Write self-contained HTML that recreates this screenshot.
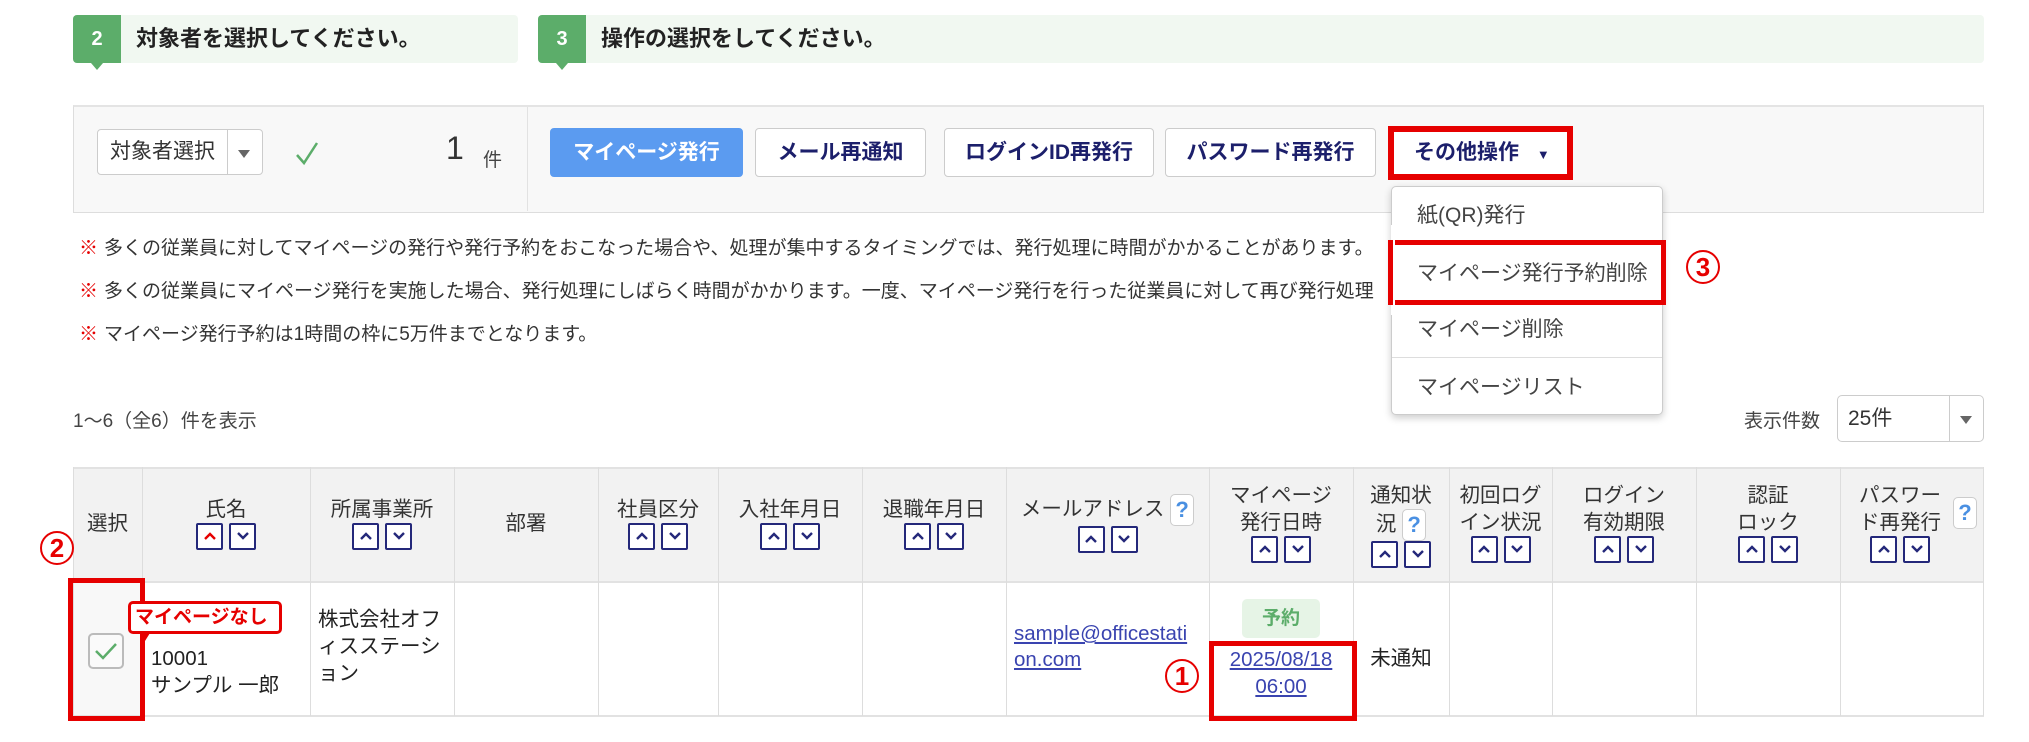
<!DOCTYPE html>
<html><head><meta charset="utf-8"><style>
*{margin:0;padding:0;box-sizing:border-box}
body{width:2029px;height:742px;background:#fff;position:relative;overflow:hidden;font-family:"Liberation Sans","Noto Sans CJK JP",sans-serif;color:#333}
.a{position:absolute}
.step{position:absolute;top:15px;height:48px;background:#f1f8f1;border-radius:4px}
.num{position:absolute;left:0;top:0;width:48px;height:48px;background:#5cad6a;color:#fff;font-weight:bold;font-size:20px;text-align:center;line-height:48px;border-radius:4px 0 0 4px}
.num:after{content:"";position:absolute;left:18px;top:48px;border:6px solid transparent;border-top:7px solid #5cad6a}
.stxt{position:absolute;left:63px;top:0;line-height:48px;font-size:22px;font-weight:bold;color:#222}
.btn{position:absolute;top:128px;height:49px;border:1px solid #ccc;border-radius:4px;background:#fff;color:#1c1f6b;font-weight:bold;font-size:21px;text-align:center;line-height:47px;white-space:nowrap}
.note{position:absolute;left:79px;font-size:19px;color:#333;white-space:nowrap}
.note b{color:#e60000;font-weight:normal;margin-right:6px}
.mi{position:absolute;left:1417px;font-size:21px;color:#444;white-space:nowrap}
.col{position:absolute;top:467px;height:249px;border-left:1px solid #ddd}
.hd{position:absolute;font-size:20.5px;color:#333;text-align:center;line-height:27px;white-space:nowrap}
.sb{display:inline-block;width:27px;height:27px;border:2px solid #24287a;border-radius:2px;background:#fff;margin:0 3px;vertical-align:top}
.sb svg{display:block;margin:6px auto 0}
.q{display:inline-block;width:24px;height:32px;border:1px solid #ccc;border-radius:5px;background:#fff;color:#4a90e2;font-weight:bold;font-size:22px;line-height:30px;text-align:center;vertical-align:middle}
.circ{position:absolute;width:34px;height:34px;border:2px solid #e60000;border-radius:50%;color:#e60000;font-weight:bold;font-size:26px;text-align:center;line-height:30px}
</style></head><body>

<div class="step" style="left:73px;width:445px"><div class="num">2</div><div class="stxt">対象者を選択してください。</div></div>
<div class="step" style="left:538px;width:1446px"><div class="num">3</div><div class="stxt">操作の選択をしてください。</div></div>

<div class="a" style="left:73px;top:105px;width:1911px;height:108px;background:#f8f8f8;border:1px solid #ddd;border-top:2px solid #e4e4e4"></div>
<div class="a" style="left:527px;top:107px;height:104px;border-left:1px solid #e2e2e2"></div>
<div class="a" style="left:97px;top:129px;width:166px;height:46px;border:1px solid #ccc;border-radius:4px;background:#fff;font-size:21px;line-height:44px;padding-left:12px">対象者選択</div>
<div class="a" style="left:227px;top:130px;height:44px;border-left:1px solid #ccc"></div>
<div class="a" style="left:238px;top:150px;border:6px solid transparent;border-top:8px solid #666"></div>
<svg class="a" style="left:295px;top:140px" width="24" height="26"><path d="M2 15 L9 23 L22 3" stroke="#5cad6a" stroke-width="2.5" fill="none"/></svg>
<div class="a" style="left:446px;top:130px;font-size:32px;color:#333">1</div>
<div class="a" style="left:483px;top:145px;font-size:19px;color:#444">件</div>

<div class="btn" style="left:550px;width:193px;background:#5b9bf0;border-color:#5b9bf0;color:#fff">マイページ発行</div>
<div class="btn" style="left:755px;width:171px">メール再通知</div>
<div class="btn" style="left:944px;width:210px">ログインID再発行</div>
<div class="btn" style="left:1165px;width:211px">パスワード再発行</div>
<div class="a" style="left:1388px;top:126px;width:185px;height:54px;border:6px solid #e60000;background:#fff;font-size:21px;font-weight:bold;color:#1c1f6b;line-height:42px;padding-left:20px;white-space:nowrap">その他操作 <span style="font-size:13px;margin-left:12px">▼</span></div>

<div class="a" style="left:1391px;top:186px;width:272px;height:229px;background:#fff;border:1px solid #ccc;border-radius:5px;box-shadow:0 3px 8px rgba(0,0,0,.2)"></div>
<div class="mi" style="top:199px">紙(QR)発行</div>
<div class="mi" style="top:257px">マイページ発行予約削除</div>
<div class="mi" style="top:313px">マイページ削除</div>
<div class="a" style="left:1392px;top:357px;width:270px;border-top:1px solid #ddd"></div>
<div class="mi" style="top:371px">マイページリスト</div>
<div class="a" style="left:1388px;top:240px;width:278px;height:65px;border:5px solid #e60000"></div>
<div class="circ" style="left:1686px;top:250px">3</div>

<div class="note" style="top:233px"><b>※</b>多くの従業員に対してマイページの発行や発行予約をおこなった場合や、処理が集中するタイミングでは、発行処理に時間がかかることがあります。</div>
<div class="note" style="top:276px"><b>※</b>多くの従業員にマイページ発行を実施した場合、発行処理にしばらく時間がかかります。一度、マイページ発行を行った従業員に対して再び発行処理</div>
<div class="note" style="top:319px"><b>※</b>マイページ発行予約は1時間の枠に5万件までとなります。</div>
<!-- redraw menu overlap area -->
<div class="a" style="left:1391px;top:225px;width:4px;height:90px;background:#fff"></div>
<div class="a" style="left:1388px;top:240px;width:5px;height:65px;background:#e60000"></div>

<div class="a" style="left:73px;top:406px;font-size:19px;color:#444">1〜6（全6）件を表示</div>
<div class="a" style="left:1744px;top:406px;font-size:19px;color:#444">表示件数</div>
<div class="a" style="left:1837px;top:395px;width:147px;height:47px;border:1px solid #ccc;border-radius:5px;font-size:21px;line-height:45px;padding-left:10px">25件</div>
<div class="a" style="left:1949px;top:396px;height:45px;border-left:1px solid #ccc"></div>
<div class="a" style="left:1960px;top:416px;border:6px solid transparent;border-top:8px solid #666"></div>

<!-- table -->
<div class="a" style="left:73px;top:467px;width:1911px;height:116px;background:#f2f2f2;border-top:2px solid #e2e2e2;border-bottom:2px solid #e2e2e2"></div>
<div class="a" style="left:73px;top:583px;width:69px;height:133px;background:#f8f8f8"></div>
<div class="a" style="left:73px;top:715px;width:1911px;border-top:2px solid #e2e2e2"></div>
<div class="col" style="left:73px"></div><div class="col" style="left:142px"></div><div class="col" style="left:310px"></div><div class="col" style="left:454px"></div><div class="col" style="left:598px"></div><div class="col" style="left:718px"></div><div class="col" style="left:862px"></div><div class="col" style="left:1006px"></div><div class="col" style="left:1209px"></div><div class="col" style="left:1353px"></div><div class="col" style="left:1449px"></div><div class="col" style="left:1552px"></div><div class="col" style="left:1696px"></div><div class="col" style="left:1840px"></div><div class="col" style="left:1983px"></div>

<svg width="0" height="0" style="position:absolute"><defs>
<symbol id="up" viewBox="0 0 14 10"><path d="M2 8 L7 3 L12 8" stroke="#24287a" stroke-width="2.4" fill="none"/></symbol>
<symbol id="upr" viewBox="0 0 14 10"><path d="M2 8 L7 3 L12 8" stroke="#e60000" stroke-width="2.4" fill="none"/></symbol>
<symbol id="dn" viewBox="0 0 14 10"><path d="M2 2 L7 7 L12 2" stroke="#24287a" stroke-width="2.4" fill="none"/></symbol>
</defs></svg>

<div class="hd" style="left:73px;width:69px;top:510px">選択</div>
<div class="hd" style="left:142px;width:168px;top:496px">氏名<br><span class="sb"><svg width="14" height="10"><use href="#upr"/></svg></span><span class="sb"><svg width="14" height="10"><use href="#dn"/></svg></span></div>
<div class="hd" style="left:310px;width:144px;top:496px">所属事業所<br><span class="sb"><svg width="14" height="10"><use href="#up"/></svg></span><span class="sb"><svg width="14" height="10"><use href="#dn"/></svg></span></div>
<div class="hd" style="left:454px;width:144px;top:510px">部署</div>
<div class="hd" style="left:598px;width:120px;top:496px">社員区分<br><span class="sb"><svg width="14" height="10"><use href="#up"/></svg></span><span class="sb"><svg width="14" height="10"><use href="#dn"/></svg></span></div>
<div class="hd" style="left:718px;width:144px;top:496px">入社年月日<br><span class="sb"><svg width="14" height="10"><use href="#up"/></svg></span><span class="sb"><svg width="14" height="10"><use href="#dn"/></svg></span></div>
<div class="hd" style="left:862px;width:144px;top:496px">退職年月日<br><span class="sb"><svg width="14" height="10"><use href="#up"/></svg></span><span class="sb"><svg width="14" height="10"><use href="#dn"/></svg></span></div>
<div class="hd" style="left:1006px;width:203px;top:494px">メールアドレス <span class="q">?</span><br><span class="sb"><svg width="14" height="10"><use href="#up"/></svg></span><span class="sb"><svg width="14" height="10"><use href="#dn"/></svg></span></div>
<div class="hd" style="left:1209px;width:144px;top:482px">マイページ<br>発行日時<br><span class="sb"><svg width="14" height="10"><use href="#up"/></svg></span><span class="sb"><svg width="14" height="10"><use href="#dn"/></svg></span></div>
<div class="hd" style="left:1353px;width:96px;top:482px">通知状<br>況 <span class="q">?</span><br><span class="sb"><svg width="14" height="10"><use href="#up"/></svg></span><span class="sb"><svg width="14" height="10"><use href="#dn"/></svg></span></div>
<div class="hd" style="left:1449px;width:103px;top:482px">初回ログ<br>イン状況<br><span class="sb"><svg width="14" height="10"><use href="#up"/></svg></span><span class="sb"><svg width="14" height="10"><use href="#dn"/></svg></span></div>
<div class="hd" style="left:1552px;width:144px;top:482px">ログイン<br>有効期限<br><span class="sb"><svg width="14" height="10"><use href="#up"/></svg></span><span class="sb"><svg width="14" height="10"><use href="#dn"/></svg></span></div>
<div class="hd" style="left:1696px;width:144px;top:482px">認証<br>ロック<br><span class="sb"><svg width="14" height="10"><use href="#up"/></svg></span><span class="sb"><svg width="14" height="10"><use href="#dn"/></svg></span></div>
<div class="hd" style="left:1845px;width:110px;top:482px">パスワー<br>ド再発行<br><span class="sb"><svg width="14" height="10"><use href="#up"/></svg></span><span class="sb"><svg width="14" height="10"><use href="#dn"/></svg></span></div>
<div class="a" style="left:1953px;top:497px"><span class="q">?</span></div>

<!-- row -->
<div class="a" style="left:88px;top:633px;width:36px;height:36px;border:2px solid #bbb;border-radius:5px;background:#fafafa"></div>
<svg class="a" style="left:93px;top:640px" width="26" height="22"><path d="M3 11 L10 18 L23 4" stroke="#5cad6a" stroke-width="2.5" fill="none"/></svg>
<div class="a" style="left:68px;top:578px;width:77px;height:143px;border:5px solid #e60000"></div>
<div class="circ" style="left:40px;top:531px">2</div>

<div class="a" style="left:128px;top:601px;width:154px;height:33px;border:3px solid #e60000;border-radius:5px;background:#fff;color:#e60000;font-weight:bold;font-size:19px;line-height:27px;padding-left:4px;white-space:nowrap;overflow:hidden">マイページなし</div>
<div class="a" style="left:140px;top:633px;border:5px solid transparent;border-top:8px solid #e60000"></div>
<div class="a" style="left:151px;top:645px;font-size:20.5px;line-height:27px;color:#222;white-space:nowrap">10001<br>サンプル 一郎</div>
<div class="a" style="left:318px;top:606px;width:140px;font-size:20.5px;line-height:27px;color:#222">株式会社オフ<br>ィスステーシ<br>ョン</div>
<div class="a" style="left:1014px;top:621px;font-size:20.5px;line-height:26px;color:#3a44b0;text-decoration:underline;white-space:nowrap">sample@officestati<br>on.com</div>
<div class="a" style="left:1242px;top:599px;width:78px;height:39px;background:#e6f4e6;border-radius:5px;color:#5cad6a;font-weight:bold;font-size:19px;text-align:center;line-height:39px">予約</div>
<div class="a" style="left:1209px;top:646px;width:144px;text-align:center;font-size:20.5px;line-height:27px;color:#3a44b0;text-decoration:underline">2025/08/18<br>06:00</div>
<div class="a" style="left:1209px;top:641px;width:148px;height:80px;border:5px solid #e60000"></div>
<div class="circ" style="left:1165px;top:659px">1</div>
<div class="a" style="left:1353px;top:641px;width:96px;text-align:center;font-size:20.5px;color:#222">未通知</div>
</body></html>
